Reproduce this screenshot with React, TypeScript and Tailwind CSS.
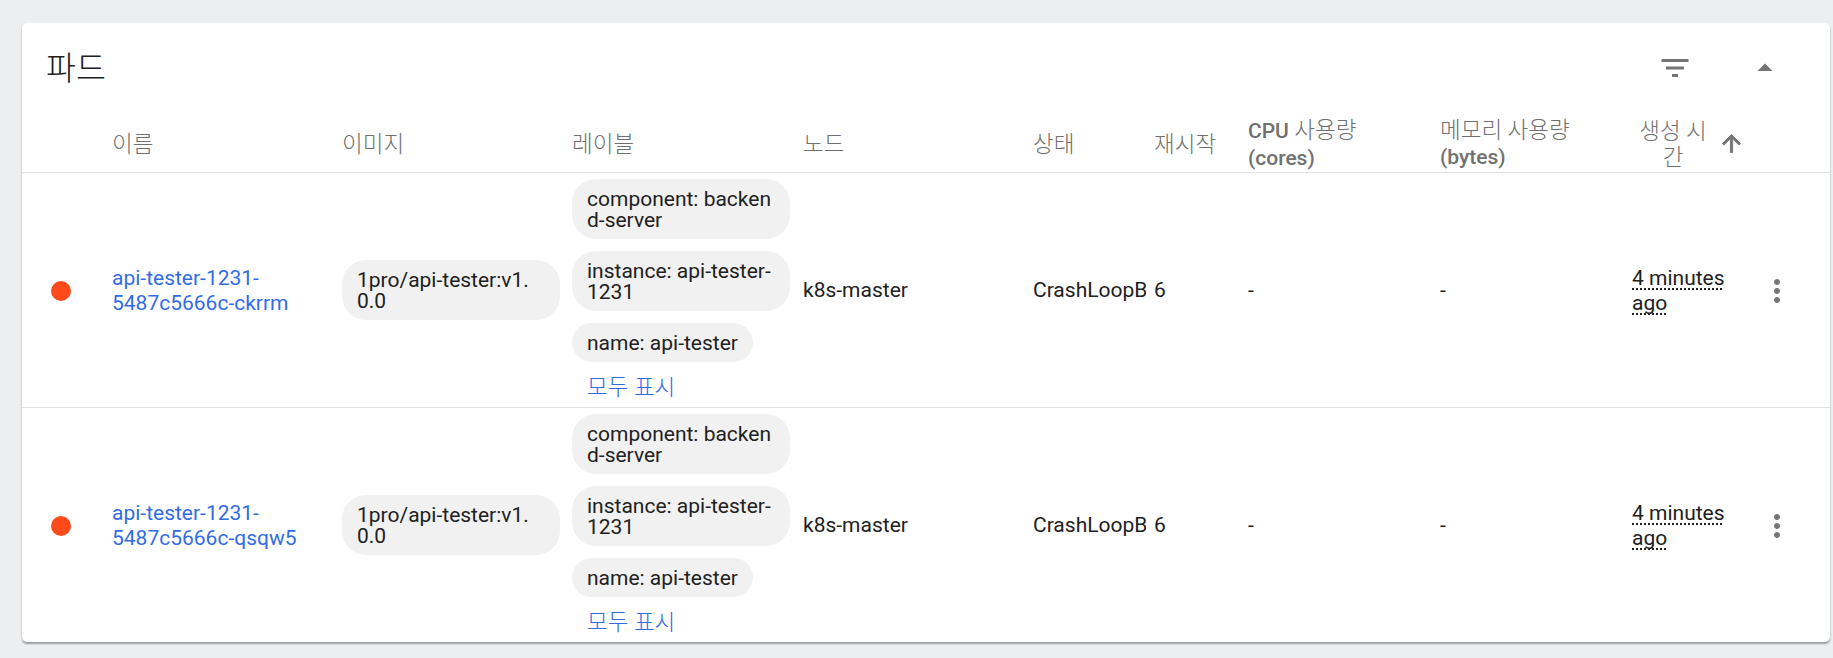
const columns = 'grid grid-cols-[90px_230px_230px_231px_230px_121px_94px_192px_192px_127px_71px]';
const font = "font-['Roboto','Noto_Sans_CJK_KR',sans-serif]";

const pods = [
  { name: 'api-tester-1231-', suffix: '5487c5666c-ckrrm' },
  { name: 'api-tester-1231-', suffix: '5487c5666c-qsqw5' },
];

function Chip({ children, className = '' }: { children: React.ReactNode; className?: string }) {
  return (
    <div className={`w-fit max-w-[218px] break-all rounded-[24px] bg-[#f1f1f1] px-[15px] pb-[8px] pt-[10px] text-[21px] leading-[21px] text-[#212121] ${className}`}>
      {children}
    </div>
  );
}

function HeaderCell({ children, className = '' }: { children: React.ReactNode; className?: string }) {
  return <div className={`flex items-center pt-[2px] text-[22.5px] font-light leading-[26px] text-[#707070] ${className}`}>{children}</div>;
}

function PodRow({ pod }: { pod: (typeof pods)[number] }) {
  return (
    <div className={`${columns} h-[235px] items-center border-t border-[#e0e0e0] text-[21px] text-[#212121]`}>
      <div className="pl-[29px] pt-[1px]">
        <div className="h-5 w-5 rounded-full bg-[#ff4a1c]" />
      </div>
      <a className="pt-[2px] leading-[25px] text-[#326ce5]">
        {pod.name}
        <br />
        {pod.suffix}
      </a>
      <div>
        <Chip>1pro/api-tester:v1.0.0</Chip>
      </div>
      <div className="flex h-full flex-col items-start pt-[6px]">
        <Chip>component: backend-server</Chip>
        <Chip className="mt-3">instance: api-tester-1231</Chip>
        <Chip className="mt-3">name: api-tester</Chip>
        <span className="mt-[12px] pl-[15px] text-[22.5px] font-light leading-[26px] text-[#326ce5]">모두 표시</span>
      </div>
      <div className="pt-[2px]">k8s-master</div>
      <div className="w-[113px] overflow-hidden whitespace-nowrap pt-[2px]">CrashLoopBackOff</div>
      <div className="pt-[2px]">6</div>
      <div className="pt-[2px]">-</div>
      <div className="pt-[2px]">-</div>
      <div className="pt-[2px] leading-[25px]">
        <span className="underline decoration-[#212121] decoration-dotted decoration-2 underline-offset-[3px] [text-decoration-skip-ink:none]">4 minutes ago</span>
      </div>
      <div className="pt-[1px]">
        <svg className="h-9 w-9 fill-[#757575]" viewBox="0 0 24 24">
          <path d="M12 8c1.1 0 2-.9 2-2s-.9-2-2-2-2 .9-2 2 .9 2 2 2zm0 2c-1.1 0-2 .9-2 2s.9 2 2 2 2-.9 2-2-.9-2-2-2zm0 6c-1.1 0-2 .9-2 2s.9 2 2 2 2-.9 2-2-.9-2-2-2z" />
        </svg>
      </div>
    </div>
  );
}

export default function App() {
  return (
    <div className={`${font} h-[658px] overflow-hidden bg-[#edeef0] pl-[22px] pr-[3px] pt-[23px]`}>
      <div className="h-[619px] overflow-hidden rounded-[5px] bg-white shadow-[0_2px_2px_rgba(0,0,0,0.35)]">
        <div className="flex h-[90px] items-center pl-[24px] pr-[47px]">
          <h1 className="mt-[1px] flex-1 text-[32.5px] font-light leading-[36px] text-[#212121]">파드</h1>
          <svg className="mr-[54px] h-9 w-9 fill-[#757575]" viewBox="0 0 24 24">
            <path d="M10 18h4v-2h-4v2zM3 6v2h18V6H3zm3 7h12v-2H6v2z" />
          </svg>
          <svg className="h-9 w-9 fill-[#757575]" viewBox="0 0 24 24">
            <path d="M7 14l5-5 5 5z" />
          </svg>
        </div>
        <div className={`${columns} h-[59px] items-center`}>
          <div />
          <HeaderCell>이름</HeaderCell>
          <HeaderCell>이미지</HeaderCell>
          <HeaderCell>레이블</HeaderCell>
          <HeaderCell>노드</HeaderCell>
          <HeaderCell>상태</HeaderCell>
          <HeaderCell>재시작</HeaderCell>
          <HeaderCell>
            <span>
              <span className="text-[21px] font-medium">CPU</span> 사용량
              <br />
              <span className="text-[21px] font-medium">(cores)</span>
            </span>
          </HeaderCell>
          <HeaderCell>
            <span>
              메모리 사용량
              <br />
              <span className="text-[21px] font-medium">(bytes)</span>
            </span>
          </HeaderCell>
          <HeaderCell>
            <span className="w-[82px] shrink-0 text-center">생성 시간</span>
            <svg className="ml-[4px] h-[27px] w-[27px] shrink-0 fill-[#757575] stroke-[#757575] stroke-[0.8]" viewBox="0 0 24 24">
              <path d="M4 12l1.41 1.41L11 7.83V20h2V7.83l5.58 5.59L20 12l-8-8-8 8z" />
            </svg>
          </HeaderCell>
          <div />
        </div>
        {pods.map((pod) => (
          <PodRow key={pod.suffix} pod={pod} />
        ))}
      </div>
    </div>
  );
}
